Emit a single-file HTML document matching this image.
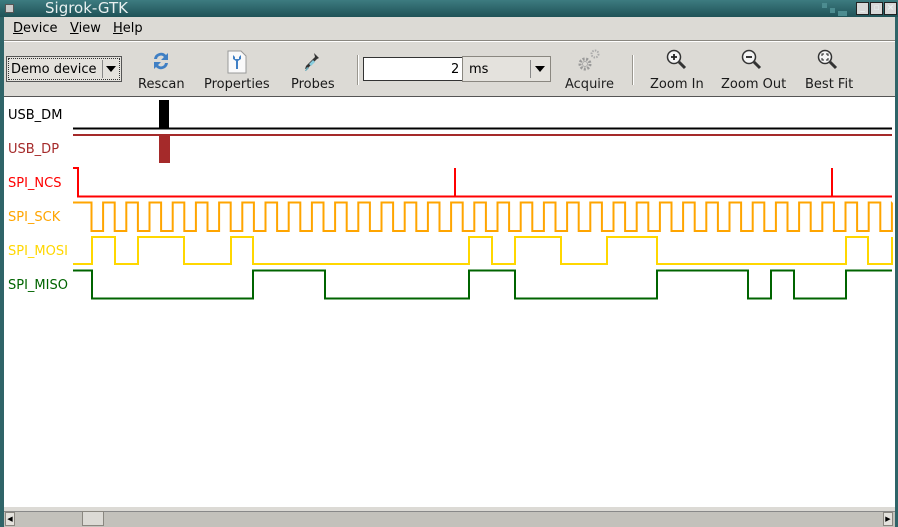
<!DOCTYPE html>
<html><head><meta charset="utf-8"><style>
*{margin:0;padding:0;box-sizing:border-box}
body{width:898px;height:527px;overflow:hidden;background:#dcdad5;font-family:"DejaVu Sans","Liberation Sans",sans-serif;font-size:13px;color:#000;position:relative}
.abs{position:absolute}
#title{left:0;top:0;width:898px;height:17px;background:linear-gradient(#3d7b80,#1f5257);color:#e8f0f0;font-size:15px;line-height:17px}
#lb{left:0;top:17px;width:4px;height:510px;background:#2f6468}
#rb{left:895px;top:17px;width:3px;height:510px;background:#2f6468}
.menu{top:21px;font-size:13px}
.menu u{text-decoration:underline}
.tb{top:77px;font-size:13px;color:#1a1a1a}
.btn{border:1px solid #8a8780;background:#e4e2dd}
.wb{width:13px;height:13px;top:2px;background:#d8d8d8;border:1px solid #222;font-size:9px;line-height:11px;text-align:center;font-weight:bold}
</style></head><body>
<div id="title" class="abs"><div class="abs" style="left:5px;top:4px;width:9px;height:9px;background:#ccc;border:1px solid #555"></div><span class="abs" style="left:45px;top:0">Sigrok-GTK</span>
<div class="abs" style="left:822px;top:3px;width:5px;height:5px;background:#4c8c90"></div>
<div class="abs" style="left:830px;top:8px;width:5px;height:5px;background:#4c8c90"></div>
<div class="abs" style="left:838px;top:11px;width:9px;height:5px;background:#4c8c90"></div>
<div class="abs wb" style="left:856px">_</div><div class="abs wb" style="left:870px">▫</div><div class="abs wb" style="left:884px">×</div>
</div>
<div id="lb" class="abs"></div><div id="rb" class="abs"></div>
<span class="abs menu" style="left:13px"><u>D</u>evice</span>
<span class="abs menu" style="left:70px"><u>V</u>iew</span>
<span class="abs menu" style="left:113px"><u>H</u>elp</span>
<div class="abs" style="left:4px;top:40px;width:891px;height:1px;background:#8a8780"></div>
<div class="abs" style="left:4px;top:41px;width:891px;height:1px;background:#fff"></div>
<div class="abs btn" style="left:6px;top:56px;width:116px;height:26px;border-color:#555"></div>
<div class="abs" style="left:8px;top:58px;width:112px;height:22px;border:1px dotted #333"></div>
<span class="abs" style="left:11px;top:62px">Demo device</span>
<div class="abs" style="left:102px;top:60px;width:1px;height:18px;background:#888"></div>
<div class="abs" style="left:106px;top:66px;border-left:5px solid transparent;border-right:5px solid transparent;border-top:6px solid #000"></div>
<svg class="abs" style="left:150px;top:50px" width="22" height="22" viewBox="0 0 22 22"><path d="M4 9a7 7 0 0 1 12-4l2-2v7h-7l3-3a4 4 0 0 0-7 2z" fill="#3f7fc4"/><path d="M18 13a7 7 0 0 1-12 4l-2 2v-7h7l-3 3a4 4 0 0 0 7-2z" fill="#3f7fc4"/></svg>
<svg class="abs" style="left:226px;top:50px" width="22" height="24" viewBox="0 0 22 24"><path d="M2 1h13l5 5v17H2z" fill="#fafafa" stroke="#999"/><path d="M7 5v4l3 2v8h2v-8l3-2V5l-2 2v2h-4V7z" fill="#3f7fc4"/></svg>
<svg class="abs" style="left:302px;top:50px" width="20" height="24" viewBox="0 0 20 24"><path d="M12 3l5 5-2 1-9 9-3 1 1-3 9-9z" fill="#333"/><path d="M5 17l-2 4 1 0 3-3z" fill="#6ab"/><path d="M7 14l4-4 2 2-4 4z" fill="#8cd"/></svg>
<span class="abs tb" style="left:138px">Rescan</span>
<span class="abs tb" style="left:204px">Properties</span>
<span class="abs tb" style="left:291px">Probes</span>
<div class="abs" style="left:357px;top:55px;width:1px;height:30px;background:#9a978f"></div>
<div class="abs" style="left:358px;top:55px;width:1px;height:30px;background:#fff"></div>
<div class="abs" style="left:363px;top:57px;width:99px;height:24px;background:#fff;border:1px solid #333;border-right:none"></div>
<span class="abs" style="left:451px;top:62px">2</span>
<div class="abs btn" style="left:462px;top:56px;width:89px;height:26px"></div>
<span class="abs" style="left:469px;top:62px">ms</span>
<div class="abs" style="left:530px;top:60px;width:1px;height:18px;background:#888"></div>
<div class="abs" style="left:535px;top:66px;border-left:5px solid transparent;border-right:5px solid transparent;border-top:6px solid #000"></div>
<svg class="abs" style="left:576px;top:48px" width="26" height="26" viewBox="0 0 26 26"><circle cx="9" cy="16" r="5" fill="none" stroke="#999" stroke-width="3" stroke-dasharray="2 1.5"/><circle cx="9" cy="16" r="2.5" fill="#dcdad5" stroke="#aaa"/><circle cx="19" cy="6" r="3.5" fill="none" stroke="#aaa" stroke-width="2" stroke-dasharray="1.5 1.2"/></svg>
<span class="abs tb" style="left:565px;color:#222">Acquire</span>
<div class="abs" style="left:632px;top:55px;width:1px;height:30px;background:#9a978f"></div>
<div class="abs" style="left:633px;top:55px;width:1px;height:30px;background:#fff"></div>
<svg class="abs" style="left:665px;top:48px" width="24" height="24" viewBox="0 0 24 24"><circle cx="9" cy="9" r="6.5" fill="#f4f4f4" stroke="#333" stroke-width="1.5"/><path d="M14 14l6 6" stroke="#333" stroke-width="3"/><path d="M6 9h6M9 6v6" stroke="#222" stroke-width="1.8"/></svg>
<svg class="abs" style="left:740px;top:48px" width="24" height="24" viewBox="0 0 24 24"><circle cx="9" cy="9" r="6.5" fill="#f4f4f4" stroke="#333" stroke-width="1.5"/><path d="M14 14l6 6" stroke="#333" stroke-width="3"/><path d="M6 9h6" stroke="#222" stroke-width="1.8"/></svg>
<svg class="abs" style="left:816px;top:48px" width="24" height="24" viewBox="0 0 24 24"><circle cx="9" cy="9" r="6.5" fill="#f4f4f4" stroke="#333" stroke-width="1.5"/><path d="M14 14l6 6" stroke="#333" stroke-width="3"/><path d="M6 8V6h2M10 6h2v2M12 10v2h-2M8 12H6v-2" fill="none" stroke="#222"/></svg>
<span class="abs tb" style="left:650px">Zoom In</span>
<span class="abs tb" style="left:721px">Zoom Out</span>
<span class="abs tb" style="left:805px">Best Fit</span>
<div class="abs" style="left:4px;top:96px;width:891px;height:1px;background:#555"></div>
<div class="abs" style="left:4px;top:97px;width:891px;height:410px;background:#fff"></div>
<div class="abs" style="left:4px;top:507px;width:891px;height:4px;background:#dcdad5"></div>
<div class="abs" style="left:4px;top:511px;width:891px;height:16px;background:#c3c1bb;border-top:1px solid #888"></div>
<div class="abs btn" style="left:5px;top:512px;width:10px;height:14px;font-size:7px;line-height:12px;text-align:center">◀</div>
<div class="abs btn" style="left:883px;top:512px;width:10px;height:14px;font-size:7px;line-height:12px;text-align:center">▶</div>
<div class="abs btn" style="left:82px;top:511px;width:22px;height:15px;background:#dcdad5"></div>
<svg class="abs" style="left:0;top:0" width="898" height="527" viewBox="0 0 898 527">
<g font-family="DejaVu Sans, Liberation Sans, sans-serif" font-size="13">
<text x="8" y="119" fill="#000">USB_DM</text>
<text x="8" y="153" fill="#a52a2a">USB_DP</text>
<text x="8" y="187" fill="#ff0000">SPI_NCS</text>
<text x="8" y="221" fill="#ffa500">SPI_SCK</text>
<text x="8" y="255" fill="#ffd700">SPI_MOSI</text>
<text x="8" y="289" fill="#006400">SPI_MISO</text>
</g>
<g fill="none" stroke-width="2">
<path d="M73 128.5H892" stroke="#000"/>
<rect x="159" y="100" width="10" height="28" fill="#000" stroke="none"/>
<path d="M73 135H892" stroke="#a52a2a"/>
<rect x="159" y="135" width="11" height="28" fill="#a52a2a" stroke="none"/>
<path d="M73 168H78V196.5H455V168V196.5H832V168V196.5H892" stroke="#f00"/>
<path id="sck" stroke="#ffa500" d="M73 202.5H91.5V231"/>
<path d="M73 264H92V237H115V264H138V237H184V264H231V237H253V264H469V237H492V264H515V237H561V264H607V237H657V264H846V237H868V264H892V237" stroke="#ffd700"/>
<path d="M73 270.5H92V298.5H253V270.5H325V298.5H469V270.5H515V298.5H657V270.5H748V298.5H771V270.5H794V298.5H846V270.5H892" stroke="#006400"/>
</g>
</svg>
<script>
var d="M73 202.5H91.5V231";
for(var k=1;k<=35;k++){var f=91.5+23.2*k,r=f-11.6;if(r>892){d+="H892";break;}d+="H"+r.toFixed(1)+"V202.5H"+Math.min(f,892).toFixed(1)+(f<892?"V231":"");}
document.getElementById("sck").setAttribute("d",d);
</script>
</body></html>
